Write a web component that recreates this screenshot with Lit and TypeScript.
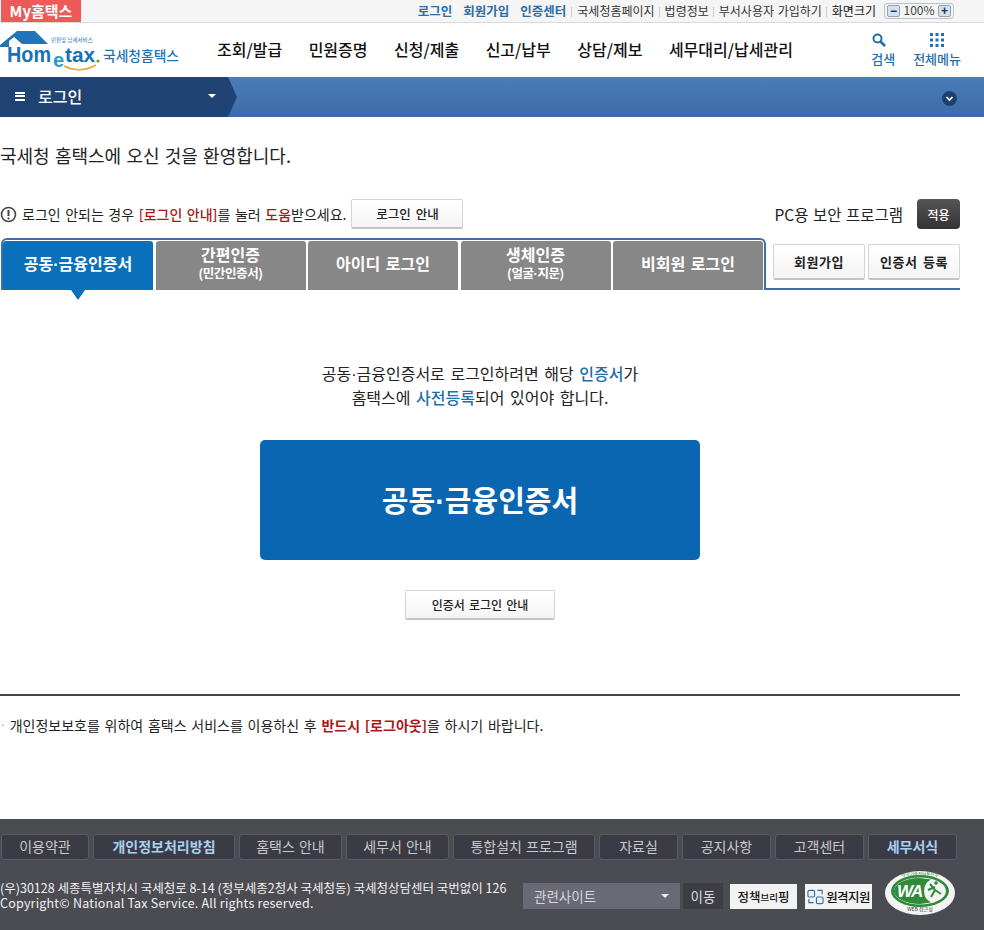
import { LitElement, html, css } from "lit";
import { customElement } from "lit/decorators.js";

const DOT = html`<span class="md">·</span>`;

@customElement("app-root")
export class AppRoot extends LitElement {
  static styles = css`
    :host { display: block; width: 984px; height: 930px; overflow: hidden; background: #fff; color: #222;
      font-family: "Noto Sans CJK KR", "Noto Sans", sans-serif; font-size: 13px; }
    * { box-sizing: border-box; }
    .md { font-family: "Liberation Sans", sans-serif; line-height: 0; }
    .page { display: flex; flex-direction: column; height: 930px; }
    .top { height: 23px; flex: none; display: flex; align-items: center; background: #f5f5f5; border-bottom: 1px solid #d9d9d9; padding-left: 1px; }
    .my { width: 80px; height: 22px; background: #ec5a5a; color: #fff; font: bold 15px "Noto Sans CJK KR", sans-serif; display: flex; align-items: center; justify-content: center; padding-bottom: 2px; }
    .util { margin-left: auto; display: flex; align-items: center; height: 22px; font-size: 12px; color: #333; padding: 0 30px 1px 0; white-space: nowrap; word-spacing: 1px; }
    .util b { color: #2a6ea8; font-weight: 700; font-size: 12.5px; margin-right: 11px; }
    .util b.last { margin-right: 5px; }
    .util .it::before { content: ""; display: inline-block; width: 1px; height: 10px; background: #ccc; margin: 0 5px 0 0; vertical-align: -1px; }
    .util .it { margin-right: 4px; }
    .util .sz { color: #111; }
    .zoom { margin-left: 4px; width: 70px; height: 16px; border: 1px solid #b9c4d2; border-radius: 3px; display: flex; align-items: center; justify-content: space-between; padding: 0 2px; font-size: 12px; line-height: 12px; color: #444; }
    .zoom span { padding-bottom: 2px; }
    .zoom i { width: 13px; height: 12px; border: 1px solid #8fa3bb; border-radius: 2px; background: #d5e0ee; font: bold 12px/10px "Liberation Sans", sans-serif; text-align: center; color: #234; }
    .head { height: 54px; flex: none; display: flex; align-items: center; position: relative; }
    .logo { width: 182px; height: 54px; flex: none; display: block; }
    .nav { display: flex; margin-left: 35px; font-size: 16px; font-weight: 500; color: #111; white-space: nowrap; height: 54px; align-items: center; padding-bottom: 2px; }
    .nav span { margin-right: 26.5px; }
    .hico { margin-left: auto; display: flex; gap: 18px; padding-right: 23px; color: #1f6fb0; font-size: 13px; font-weight: 500; }
    .hico div { display: flex; flex-direction: column; align-items: center; gap: 3px; line-height: 17px; }
    .hico svg { display: block; }
    .hico svg.mag { margin-right: 8px; }
    .bar { height: 40px; flex: none; background: linear-gradient(#4a7db8, #3c6ca8); display: flex; align-items: stretch; position: relative; }
    .crumb { width: 237px; flex: none; background: #1f4373; clip-path: polygon(0 0, 228px 0, 237px 50%, 228px 100%, 0 100%); display: flex; align-items: center; padding: 0 0 2px 15px; color: #fff; font-size: 16px; font-weight: 500; }
    .burger { width: 10px; height: 9px; border-top: 2px solid #fff; border-bottom: 2px solid #fff; margin-right: 13px; position: relative; }
    .burger::after { content: ""; position: absolute; left: 0; right: 0; top: 1.5px; height: 2px; background: #fff; }
    .caret { width: 0; height: 0; border: 4px solid transparent; border-top: 4px solid #fff; border-bottom: 0; margin-left: 126px; }
    .down { margin: 14px 27px 0 auto; width: 15px; height: 15px; }
    .main { width: 960px; flex: none; }
    h1 { margin: 0; padding-top: 23px; font-size: 18px; line-height: 30px; font-weight: 400; color: #222; word-spacing: 1.2px; }
    .info { display: flex; align-items: center; height: 30px; margin-top: 29px; font-size: 14px; white-space: nowrap; word-spacing: 1.4px; }
    .info svg { margin-right: 5px; flex: none; }
    .info em { font-style: normal; color: #a61a1a; font-weight: 500; }
    .btn { background: linear-gradient(#fff, #f4f4f4); border: 1px solid #d4d4d4; border-bottom: 2px solid #c4c4c4; border-radius: 2px; display: flex; align-items: center; justify-content: center; font-size: 12.5px; color: #222; font-weight: 500; word-spacing: 2px; }
    .b1 { width: 112px; height: 30px; margin-left: 5px; }
    .sec { margin-left: auto; font-size: 15.5px; font-weight: 400; word-spacing: 1px; }
    .apply { width: 43px; height: 30px; margin-left: 14px; background: linear-gradient(#555, #333); border-radius: 4px; color: #fff; font-size: 12px; font-weight: 500; display: flex; align-items: center; justify-content: center; }
    .tabrow { display: flex; height: 52px; margin-top: 9px; padding-left: 1px; }
    .tabs { width: 765px; flex: none; border: 2px solid #3f6fa8; border-bottom: 0; border-radius: 6px 6px 0 0; display: flex; padding: 1px 0 0 0; gap: 2.5px; position: relative; }
    .tab { width: 150px; background: #878787; color: #fff; border-radius: 3px 3px 0 0; display: flex; flex-direction: column; align-items: center; justify-content: center; font-size: 16px; font-weight: 700; line-height: 19px; padding-bottom: 5px; word-spacing: 2px; }
    .tab small { font-size: 12.5px; font-weight: 700; line-height: 18px; letter-spacing: -0.4px; word-spacing: 0; }
    .tab.on { background: #0a70b9; position: relative; }
    .tab.on::after { content: ""; position: absolute; left: 68px; top: 49px; width: 0; height: 0; border: 7px solid transparent; border-top: 10px solid #0a70b9; border-bottom: 0; }
    .rside { flex: 1; border-bottom: 2px solid #3f6fa8; display: flex; gap: 3px; justify-content: flex-end; padding-top: 6px; height: 52px; }
    .rside .btn { width: 92px; height: 36px; font-size: 13px; font-weight: 700; letter-spacing: 0.5px; }
    .msg { margin-top: 71px; text-align: center; font-size: 16px; line-height: 24px; color: #222; word-spacing: 2px; }
    .msg b { color: #1f6fa8; font-weight: 500; }
    .big { width: 440px; height: 120px; margin: 31px auto 0; border-radius: 5px; background: #0a66b0; color: #fff; font-size: 29px; font-weight: 700; display: flex; align-items: center; justify-content: center; padding-bottom: 3px; }
    .b2 { width: 150px; height: 30px; margin: 30px auto 0; font-size: 12px; word-spacing: 1.5px; }
    .note { margin-top: 74px; border-top: 2px solid #444; padding-top: 19px; font-size: 14px; line-height: 20px; display: flex; gap: 4px; word-spacing: 1.6px; white-space: nowrap; }
    .note em { font-style: normal; color: #a61a1a; font-weight: 700; }
    .dot { color: #888; font-size: 10px; }
    .foot { margin-top: auto; height: 111px; flex: none; background: #4b4b52; padding: 15px 0 0 1px; color: #fff; }
    .flinks { display: flex; gap: 4px; }
    .flinks span { height: 26px; background: #3a3b44; border: 1px solid #5a5b63; border-radius: 3px; color: #c9c9c9; display: flex; align-items: center; justify-content: center; font-size: 14px; padding-bottom: 3px; word-spacing: 1px; }
    .flinks span.hi { color: #a9d0f2; font-weight: 700; }
    .fb { display: flex; margin-top: 10px; position: relative; height: 60px; }
    .addr { width: 523px; flex: none; padding-top: 10px; font-size: 12.5px; line-height: 15px; margin-left: -1px; white-space: nowrap; color: #f2f2f2; }
    .cp { letter-spacing: 0.21px; }
    .sel { width: 157px; height: 26px; margin-top: 13px; background: #696a75; color: #d8d8d8; display: flex; align-items: center; padding: 0 11px; font-size: 13.5px; justify-content: space-between; }
    .sel i { width: 0; height: 0; border: 4px solid transparent; border-top: 4px solid #eee; border-bottom: 0; }
    .go { width: 40px; height: 26px; margin: 13px 0 0 3px; background: #3d3e45; color: #ddd; font-size: 13.5px; display: flex; align-items: center; justify-content: center; }
    .wb { width: 67px; height: 25px; margin-top: 14px; background: #f2f2f2; color: #111; font-size: 12.5px; font-weight: 500; display: flex; align-items: center; justify-content: center; gap: 2px; letter-spacing: -0.6px; }
    .w1 { margin-left: 7px; gap: 0; letter-spacing: 0; }
    .w1 span { font-size: 9.5px; }
    .w2 { margin-left: 8px; }
    .wa { margin: 0 0 0 12px; display: block; }
  `;

  render() {
    const links: [string, number, boolean?][] = [
      ["이용약관", 88], ["개인정보처리방침", 142, true], ["홈택스 안내", 103], ["세무서 안내", 103],
      ["통합설치 프로그램", 142], ["자료실", 79], ["공지사항", 89], ["고객센터", 89], ["세무서식", 89, true],
    ];
    return html`<div class="page">
      <div class="top">
        <div class="my">My홈택스</div>
        <div class="util">
          <b>로그인</b><b>회원가입</b><b class="last">인증센터</b>
          <span class="it">국세청홈페이지</span><span class="it">법령정보</span><span class="it">부서사용자 가입하기</span>
          <span class="it sz">화면크기</span>
          <div class="zoom"><i>−</i><span>100%</span><i>+</i></div>
        </div>
      </div>
      <div class="head">
        <svg class="logo" viewBox="0 0 182 54" aria-label="Hometax">
          <path d="M0 22 L17 8 L35 8 L48 21 L22 21 L14 14 L9 18 L9 24 L0 24 Z" fill="#1f75b8"/>
          <text x="51" y="19" font-size="5.5" fill="#2a7abb" font-family="Noto Sans CJK KR">민원및 납세서비스</text>
          <text x="7" y="39" font-size="22" font-weight="700" fill="#1572b6" font-family="Liberation Sans" textLength="44" lengthAdjust="spacingAndGlyphs">Hom</text>
          <text x="53" y="44" font-size="20" font-weight="700" fill="#2a9ad0" font-family="Liberation Sans">e</text>
          <text x="65" y="39" font-size="21" font-weight="700" fill="#1572b6" font-family="Liberation Sans" textLength="30" lengthAdjust="spacingAndGlyphs">tax</text>
          <circle cx="98" cy="38" r="1.6" fill="#5aa02c"/>
          <path d="M64 43 Q80 51 96 42" stroke="#eea63a" stroke-width="1.5" fill="none"/>
          <text x="103" y="38" font-size="14" font-weight="500" fill="#1f74b4" font-family="Noto Sans CJK KR" textLength="76" lengthAdjust="spacingAndGlyphs">국세청홈택스</text>
        </svg>
        <div class="nav">
          <span>조회/발급</span><span>민원증명</span><span>신청/제출</span><span>신고/납부</span><span>상담/제보</span><span>세무대리/납세관리</span>
        </div>
        <div class="hico">
          <div>
            <svg class="mag" width="14" height="14" viewBox="0 0 14 14"><circle cx="5.5" cy="5.5" r="4" fill="none" stroke="#1f6fb0" stroke-width="2"/><path d="M8.5 8.5 L13 13" stroke="#1f6fb0" stroke-width="2.6"/></svg>
            <span>검색</span>
          </div>
          <div>
            <svg width="14" height="14" viewBox="0 0 14 14" fill="#1f6fb0"><rect width="3" height="3"/><rect x="5.5" width="3" height="3"/><rect x="11" width="3" height="3"/><rect y="5.5" width="3" height="3"/><rect x="5.5" y="5.5" width="3" height="3"/><rect x="11" y="5.5" width="3" height="3"/><rect y="11" width="3" height="3"/><rect x="5.5" y="11" width="3" height="3"/><rect x="11" y="11" width="3" height="3"/></svg>
            <span>전체메뉴</span>
          </div>
        </div>
      </div>
      <div class="bar">
        <div class="crumb"><span class="burger"></span><span>로그인</span><span class="caret"></span></div>
        <svg class="down" viewBox="0 0 15 15"><circle cx="7.5" cy="7.5" r="7.5" fill="#1f3f6e"/><path d="M4.5 6 L7.5 9 L10.5 6" fill="none" stroke="#fff" stroke-width="1.6"/></svg>
      </div>
      <div class="main">
        <h1>국세청 홈택스에 오신 것을 환영합니다.</h1>
        <div class="info">
          <svg width="17" height="17" viewBox="0 0 17 17"><circle cx="8.5" cy="8.5" r="7" fill="none" stroke="#444" stroke-width="1.6"/><path d="M8.5 4 V10" stroke="#444" stroke-width="2"/><circle cx="8.5" cy="12.4" r="1.1" fill="#444"/></svg>
          <span>로그인 안되는 경우 <em>[로그인 안내]</em>를 눌러 <em>도움</em>받으세요.</span>
          <div class="btn b1">로그인 안내</div>
          <span class="sec">PC용 보안 프로그램</span>
          <div class="apply">적용</div>
        </div>
        <div class="tabrow">
          <div class="tabs">
            <div class="tab on"><span>공동${DOT}금융인증서</span></div>
            <div class="tab">간편인증<small>(민간인증서)</small></div>
            <div class="tab">아이디 로그인</div>
            <div class="tab">생체인증<small>(얼굴${DOT}지문)</small></div>
            <div class="tab">비회원 로그인</div>
          </div>
          <div class="rside"><div class="btn">회원가입</div><div class="btn">인증서 등록</div></div>
        </div>
        <div class="msg">공동${DOT}금융인증서로 로그인하려면 해당 <b>인증서</b>가<br>홈택스에 <b>사전등록</b>되어 있어야 합니다.</div>
        <div class="big"><span>공동${DOT}금융인증서</span></div>
        <div class="btn b2">인증서 로그인 안내</div>
        <div class="note"><span class="dot">·</span><span>개인정보보호를 위하여 홈택스 서비스를 이용하신 후 <em>반드시 [로그아웃]</em>을 하시기 바랍니다.</span></div>
      </div>
      <div class="foot">
        <div class="flinks">
          ${links.map(([t, w, hi]) => html`<span class=${hi ? "hi" : ""} style="width:${w}px">${t}</span>`)}
        </div>
        <div class="fb">
          <div class="addr">(우)30128 세종특별자치시 국세청로 8-14 (정부세종2청사 국세청동) 국세청상담센터 국번없이 126<br><span class="cp">Copyright© National Tax Service. All rights reserved.</span></div>
          <div class="sel"><span>관련사이트</span><i></i></div>
          <div class="go">이동</div>
          <div class="wb w1">정책<span>브리</span>핑</div>
          <div class="wb w2">
            <svg width="17" height="16" viewBox="0 0 18 16" fill="none" stroke="#2a6fb0" stroke-width="1.2"><rect x="1" y="1" width="7" height="7" rx="1.5"/><rect x="10" y="8" width="7" height="7" rx="1.5"/><path d="M11 1 H16 V5 M2 10 V14 H7"/></svg>
            원격지원
          </div>
          <svg class="wa" width="72" height="46" viewBox="0 0 72 46">
            <ellipse cx="36" cy="23" rx="35" ry="22" fill="#f4f4f4"/>
            <ellipse cx="36" cy="21" rx="29" ry="16" fill="#2f8a3a"/>
            <ellipse cx="36" cy="21" rx="26" ry="13.5" fill="#f4f4f4"/>
            <path d="M10 21 A26 13 0 0 1 36 8 L47 9.5 A13 13 0 0 0 47 32.5 L36 34 A26 13 0 0 1 10 21 Z" fill="#2f8a3a"/>
            <path d="M46 14 L51 20 L47 27 M51 20 L57 24 M44 20 L51 17" stroke="#2f8a3a" stroke-width="2" fill="none"/>
            <circle cx="52" cy="13" r="1.8" fill="#2f8a3a"/>
            <text x="13" y="27" font-size="17" font-style="italic" font-weight="700" fill="#fff" font-family="Liberation Sans" letter-spacing="-1">WA</text>
            <text x="36" y="5.5" text-anchor="middle" font-size="4.5" fill="#2f8a3a" font-family="Noto Sans CJK KR">과학기술정보통신부</text>
            <text x="36" y="41" text-anchor="middle" font-size="5" fill="#333" font-family="Noto Sans CJK KR">WEB 접근성</text>
          </svg>
        </div>
      </div>
    </div>`;
  }
}
